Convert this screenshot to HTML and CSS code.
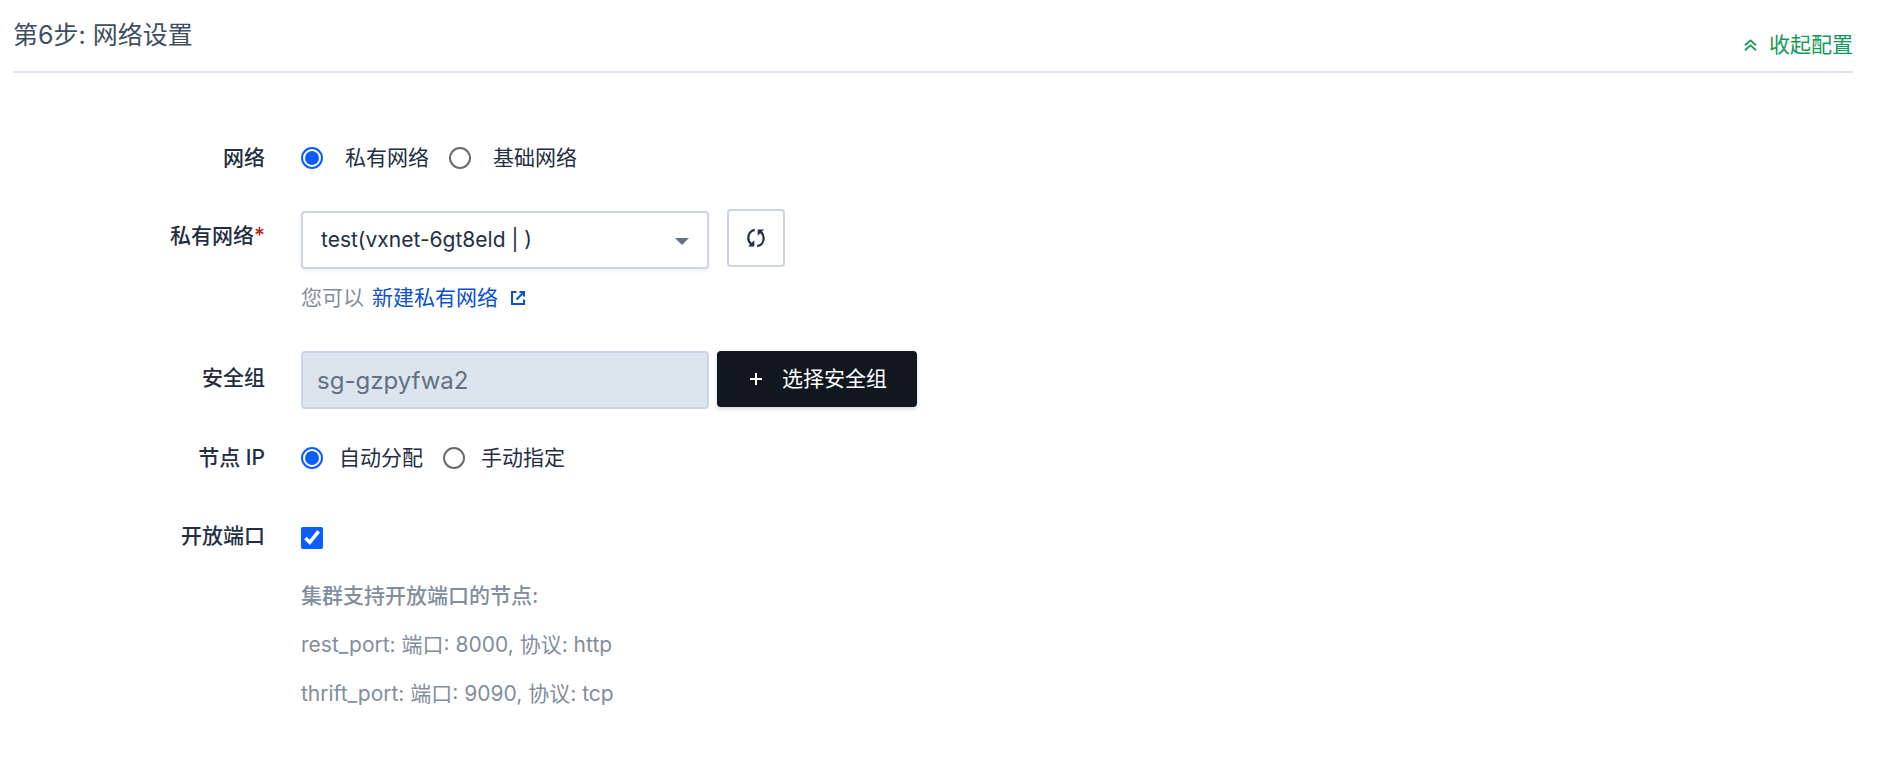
FILE: index.html
```html
<!DOCTYPE html>
<html lang="zh-CN">
<head>
<meta charset="utf-8">
<title>网络设置</title>
<link rel="stylesheet" href="styles.css">
</head>
<body>
<form class="step">
  <header class="step-header">
    <h2 class="step-title">第6步: 网络设置</h2>
    <button type="button" class="collapse">
      <svg width="13" height="12" viewBox="0 0 13 12" fill="none" stroke="currentColor" stroke-width="1.8" aria-hidden="true"><path d="M1 6.200 6.500 1.400 12 6.200M1 11.200 6.500 6.400 12 11.200"/></svg>
      <span>收起配置</span>
    </button>
  </header>

  <div class="row row-network" role="radiogroup" aria-labelledby="network-label">
    <span class="label" id="network-label">网络</span>
    <div class="choices">
      <label class="choice choice-wide"><input type="radio" name="network" checked><span>私有网络</span></label>
      <label class="choice choice-wide"><input type="radio" name="network"><span>基础网络</span></label>
    </div>
  </div>

  <div class="row row-vxnet">
    <label class="label label-field" for="vxnet">私有网络<span class="required">*</span></label>
    <div>
      <div class="select-line">
        <div class="select-box">
          <select id="vxnet" class="select"><option>test(vxnet-6gt8eld | )</option></select>
          <svg class="caret" width="14" height="7" viewBox="0 0 14 7" aria-hidden="true"><path d="M0 0h14L7 7z" fill="#637182"/></svg>
        </div>
        <button type="button" class="refresh" aria-label="刷新">
          <svg width="20" height="20" viewBox="0 0 20 20" fill="none" stroke="#242e42" stroke-width="2.2" aria-hidden="true"><path d="M8.800 1.800C4.600 2.400 2.300 6.200 2.300 10c0 2.600 1.200 4.900 3.400 6.500M11.200 18.200c4.200-.6 6.500-4.400 6.500-8.200 0-2.600-1.200-4.900-3.400-6.500"/><path d="M2 18.600h6.300v-6.300zM18 1.400h-6.300v6.300z" fill="#242e42" stroke="none"/></svg>
        </button>
      </div>
      <p class="help"><span>您可以</span><a class="link" href="#">新建私有网络<svg width="16" height="16" viewBox="0 0 16 16" fill="none" stroke="currentColor" stroke-width="2" aria-hidden="true"><path d="M6.500 2H2v12h12V9.500M9.500 2H14v4.500M14 2 6.500 9.500"/></svg></a></p>
    </div>
  </div>

  <div class="row row-group">
    <label class="label label-field" for="group">安全组</label>
    <div class="group-line">
      <input id="group" class="group-input" type="text" value="sg-gzpyfwa2" disabled>
      <button type="button" class="pick">
        <svg width="14" height="14" viewBox="0 0 14 14" fill="none" stroke="currentColor" stroke-width="2" aria-hidden="true"><path d="M7 1v12M1 7h12"/></svg>
        <span>选择安全组</span>
      </button>
    </div>
  </div>

  <div class="row row-ip" role="radiogroup" aria-labelledby="ip-label">
    <span class="label" id="ip-label">节点 IP</span>
    <div class="choices">
      <label class="choice"><input type="radio" name="ip" checked><span>自动分配</span></label>
      <label class="choice"><input type="radio" name="ip"><span>手动指定</span></label>
    </div>
  </div>

  <div class="row row-ports">
    <label class="label" for="ports">开放端口</label>
    <div>
      <div class="check-line"><input id="ports" type="checkbox" checked></div>
      <div class="ports">
        <p class="ports-title">集群支持开放端口的节点:</p>
        <p>rest_port: 端口: 8000, 协议: http</p>
        <p>thrift_port: 端口: 9090, 协议: tcp</p>
      </div>
    </div>
  </div>
</form>
</body>
</html>
```
FILE: styles.css
```css
* {
  box-sizing: border-box;
}

body {
  margin: 0;
  background: #fff;
  color: #242e42;
  font: 400 21px/32px Inter, "Noto Sans CJK SC", sans-serif;
}

p,
h2 {
  margin: 0;
}

button,
input,
select {
  margin: 0;
  font: inherit;
  color: inherit;
}

svg {
  flex: none;
}

.step {
  padding: 0 37px 0 13px;
}

.step-header {
  display: flex;
  justify-content: space-between;
  align-items: flex-end;
  padding: 17px 0 10px;
  border-bottom: 2px solid #dce5ed;
}

.step-title {
  padding-bottom: 8px;
  font-size: 25px;
  line-height: 36px;
  font-weight: 400;
  color: #3f4e61;
}

.collapse {
  display: flex;
  align-items: center;
  gap: 12px;
  padding: 0;
  border: 0;
  background: none;
  color: #159957;
}

.row {
  display: grid;
  grid-template-columns: 252px 1fr;
  column-gap: 36px;
}

.row-network {
  margin-top: 69px;
}

.row-vxnet {
  margin-top: 35px;
}

.row-group {
  margin-top: 37px;
}

.row-ip {
  margin-top: 33px;
}

.row-ports {
  margin-top: 46px;
}

.label {
  text-align: right;
  font-weight: 500;
}

.label-field {
  padding-top: 11px;
}

.required {
  color: #b91c1c;
}

.choices {
  display: flex;
  gap: 20px;
}

.choice {
  display: flex;
  align-items: center;
  gap: 16px;
}

.choice-wide {
  gap: 22px;
}

input[type="radio"] {
  width: 22px;
  height: 22px;
  border: 2px solid #6b6b6b;
  border-radius: 50%;
  background: #fff;
  appearance: none;
}

input[type="radio"]:checked {
  padding: 2px;
  border-color: #0d5cff;
  background: #0d5cff content-box;
}

input[type="checkbox"] {
  width: 22px;
  height: 22px;
  accent-color: #0d5cff;
}

.select-line {
  display: flex;
  gap: 18px;
}

.select-box {
  display: grid;
  align-items: center;
  width: 408px;
  margin-top: 2px;
}

.select {
  grid-area: 1 / 1;
  height: 58px;
  padding: 0 48px 0 18px;
  border: 2px solid #cbd6e2;
  border-radius: 4px;
  background: #fff;
  box-shadow: 0 2px 4px rgba(36, 46, 66, 0.08);
  appearance: none;
}

.caret {
  grid-area: 1 / 1;
  justify-self: end;
  margin: 2px 20px 0 0;
  pointer-events: none;
}

.refresh {
  display: flex;
  align-items: center;
  justify-content: center;
  width: 58px;
  height: 58px;
  padding: 0;
  border: 2px solid #cbd6e2;
  border-radius: 4px;
  background: #fff;
}

.help {
  display: flex;
  gap: 8px;
  margin-top: 13px;
  color: #828e9c;
}

.link {
  display: flex;
  align-items: center;
  gap: 12px;
  color: #0b50d0;
  text-decoration: none;
}

.group-line {
  display: flex;
  align-items: flex-start;
  gap: 8px;
}

.group-input {
  width: 408px;
  height: 58px;
  padding: 0 14px;
  border: 2px solid #cbd6e2;
  border-radius: 4px;
  background: #dce5ed;
  color: #637182;
  font-size: 24px;
}

.pick {
  display: flex;
  align-items: center;
  gap: 19px;
  height: 56px;
  padding: 0 30px 0 32px;
  border: 0;
  border-radius: 4px;
  background: #10171f;
  box-shadow: 0 2px 4px rgba(36, 46, 66, 0.2);
  color: #fff;
}

.check-line {
  display: flex;
  align-items: center;
  height: 36px;
}

.ports {
  display: grid;
  gap: 17px;
  margin-top: 24px;
  color: #828e9c;
}

.ports-title {
  font-weight: 500;
}
```
